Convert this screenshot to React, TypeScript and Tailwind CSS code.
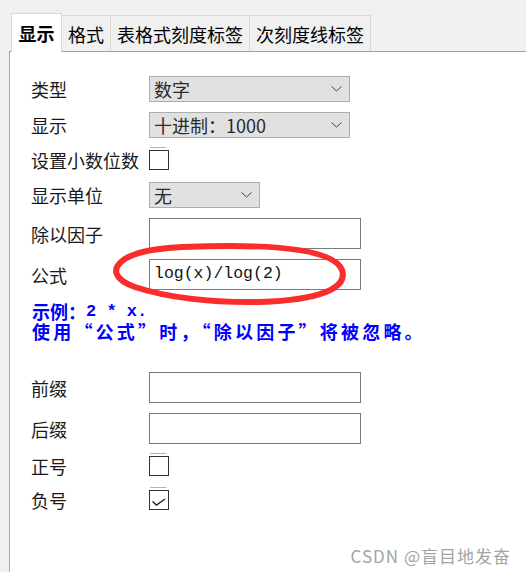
const cjk = "font-['Noto_Sans_CJK_SC',sans-serif]";

const Chevron = () => (
  <svg width="11" height="6" viewBox="0 0 11 6" className="shrink-0">
    <path d="M0.5 0.5 L5.5 5 L10.5 0.5" fill="none" stroke="#444" strokeWidth="1" />
  </svg>
);

const Select = ({ value, width }: { value: string; width: string }) => (
  <div
    className={`${width} h-[26px] bg-[#e1e1e1] border border-[#adadad] flex items-center justify-between pl-[4px] pr-[7px] text-[18px] text-[#2a2a2a] leading-none`}
  >
    <span>{value}</span>
    <Chevron />
  </div>
);

const TextBox = ({ value }: { value?: string }) => (
  <div className="w-[212px] h-[31px] bg-white border border-[#7a7a7a] flex items-center pl-[4px] font-['Liberation_Mono',monospace] text-[16.5px] text-[#111]">
    {value}
  </div>
);

const Check = ({ checked }: { checked?: boolean }) => (
  <div className="relative w-[20px] h-[20px] border border-[#333] bg-white before:content-[''] before:absolute before:-top-[4px] before:left-[0px] before:w-[16px] before:h-px before:bg-[#b4b4b4]">
    {checked && (
      <svg width="18" height="18" viewBox="0 0 18 18" className="absolute left-0 top-0">
        <path d="M2.5 10.5 L6.5 14 L15 8" fill="none" stroke="#222" strokeWidth="1.4" />
      </svg>
    )}
  </div>
);

const Row = ({ label, children, className }: { label: string; children: React.ReactNode; className: string }) => (
  <div className={`flex items-center ${className}`}>
    <div className="w-[118px] text-[18px] text-[#1a1a1a] leading-none">{label}</div>
    {children}
  </div>
);

const tabs = ['格式', '表格式刻度标签', '次刻度线标签'];
const tabWidths = ['w-[49px]', 'w-[139px]', 'w-[121px]'];

export default function App() {
  return (
    <div className={`relative w-[526px] h-[572px] bg-[#f0f0f0] flex flex-col overflow-hidden ${cjk}`}>
      {/* tabs */}
      <div className="h-[51px] flex items-end pl-[11px] relative z-10 text-[18px] leading-none">
        <div className="w-[51px] h-[39px] -mb-px bg-white border border-b-0 border-[#d9d9d9] flex items-center justify-center font-bold text-black">
          显示
        </div>
        {tabs.map((t, i) => (
          <div
            key={t}
            className={`${tabWidths[i]} h-[36px] border-t border-r border-[#d9d9d9] flex items-center justify-center text-black`}
          >
            {t}
          </div>
        ))}
      </div>

      {/* panel */}
      <div className="flex-1 ml-[9px] bg-white border-t border-l border-t-[#a0a0a0] border-l-[#a8a8b8] pl-[21px] pt-[24px]">
        <Row label="类型" className="h-[26px]">
          <Select value="数字" width="w-[201px]" />
        </Row>
        <Row label="显示" className="h-[26px] mt-[10px]">
          <Select value="十进制：1000" width="w-[201px]" />
        </Row>
        <Row label="设置小数位数" className="h-[26px] mt-[9px]">
          <Check />
        </Row>
        <Row label="显示单位" className="h-[26px] mt-[9px]">
          <Select value="无" width="w-[111px]" />
        </Row>
        <Row label="除以因子" className="h-[31px] mt-[10px]">
          <TextBox />
        </Row>
        <Row label="公式" className="h-[31px] mt-[10px]">
          <TextBox value="log(x)/log(2)" />
        </Row>

        <div className="mt-[11px] pl-px text-[18px] leading-none font-bold text-[#0000ff]">
          <div className="h-[20px] flex items-center">
            <span>示例：</span>
            <span className="font-['Liberation_Mono',monospace] text-[17px] leading-none">2 * x.</span>
          </div>
          <div className="h-[20px] flex items-center tracking-[3.2px] whitespace-nowrap">
            使用“公式”时，“除以因子”将被忽略。
          </div>
        </div>

        <Row label="前缀" className="h-[31px] mt-[31px]">
          <TextBox />
        </Row>
        <Row label="后缀" className="h-[31px] mt-[10px]">
          <TextBox />
        </Row>
        <Row label="正号" className="h-[26px] mt-[9px]">
          <Check />
        </Row>
        <Row label="负号" className="h-[26px] mt-[8px]">
          <Check checked />
        </Row>
      </div>

      {/* hand-drawn red mark */}
      <svg className="absolute left-0 top-0 pointer-events-none" width="526" height="572">
        <path
          d="M121 262 C135 248, 180 246, 230 246 C290 246, 335 252, 342 270 C348 288, 320 300, 260 302 C210 303, 165 297, 135 287 C115 280, 112 270, 121 262 Z"
          fill="none"
          stroke="#fa2d2d"
          strokeWidth="6"
          strokeLinejoin="round"
        />
      </svg>

      <div className="absolute right-[15px] bottom-[8px] text-[17px] tracking-[1px] text-[#a3a3a3] leading-none">
        CSDN @盲目地发奋
      </div>
    </div>
  );
}
